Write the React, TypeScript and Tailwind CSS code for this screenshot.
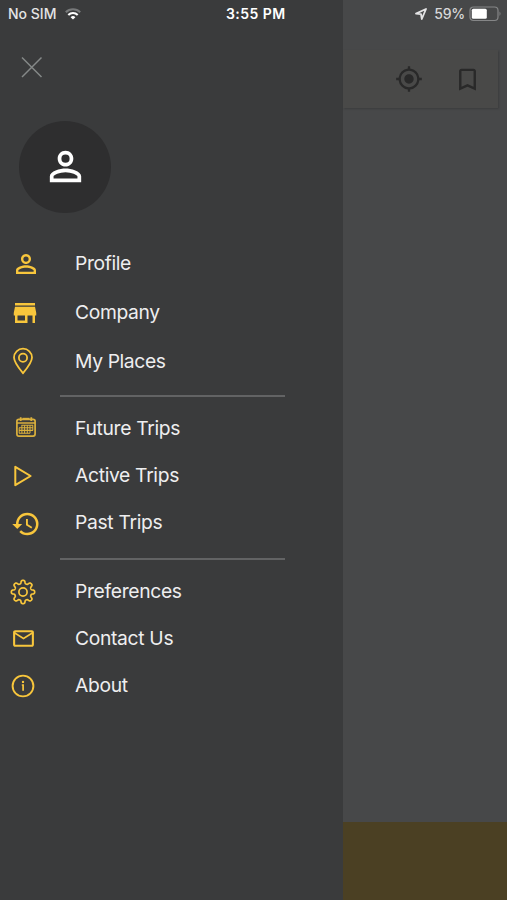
import React from "react";
import {
  MdBookmarkBorder,
  MdHistory,
  MdMailOutline,
  MdMyLocation,
  MdPersonOutline,
  MdStore,
} from "react-icons/md";

type MenuItem = {
  label: string;
  icon: React.ReactNode;
};

// Eight rounded teeth around the centre of a 26x26 box
const gearPoints = Array.from({ length: 180 }, (_, i) => {
  const a = (i / 180) * Math.PI * 2;
  const r = 10.1 + 1.6 * Math.tanh(2 * Math.cos(8 * a));
  return `${(13 + r * Math.sin(a)).toFixed(2)},${(13 - r * Math.cos(a)).toFixed(2)}`;
}).join(" ");

function PinIcon() {
  return (
    <svg width="22" height="28" viewBox="0 0 22 28" fill="none" stroke="currentColor" strokeWidth="1.8" className="ml-3">
      <path d="M11 26.2C8.2 22.8 2 15.4 2 10.5a9 8.8 0 0 1 18 0c0 4.9-6.2 12.3-9 15.7Z" />
      <circle cx="11" cy="10.8" r="4.1" />
    </svg>
  );
}

function CalendarIcon() {
  return (
    <svg width="20" height="20" viewBox="0 0 20 20" fill="none" stroke="currentColor" className="ml-4 mb-[3px] opacity-85">
      <rect x="0.9" y="2.3" width="18.2" height="16.8" rx="2" strokeWidth="1.7" />
      <path d="M1 6h18" strokeWidth="1.5" />
      <path d="M4.7 0.3v3.8M15.3 0.3v3.8" strokeWidth="1.8" />
      <path d="M6.5 1.4h7" strokeWidth="1.2" />
      <path d="M5.5 8.2h11.5M3 10.8h14M3 13.4h14M3 16.2h11" strokeWidth="1.1" />
      <path d="M3.2 10.8v5.4M5.9 8.2v8M8.6 8.2v8M11.3 8.2v8M14 8.2v8M16.8 8.2v5.2" strokeWidth="1" />
    </svg>
  );
}

function PlayIcon() {
  return (
    <svg width="20" height="22" viewBox="0 0 20 22" fill="none" stroke="currentColor" strokeWidth="2" strokeLinejoin="round" className="ml-[13px]">
      <path d="M2.3 1.8v18.4L17.6 11Z" />
    </svg>
  );
}

function GearIcon() {
  return (
    <svg width="26" height="26" viewBox="0 0 26 26" fill="none" stroke="currentColor" strokeWidth="1.7" className="ml-[10px] mt-[1px]">
      <polygon points={gearPoints} strokeLinejoin="round" />
      <circle cx="13" cy="13" r="4.1" />
    </svg>
  );
}

function InfoIcon() {
  return (
    <svg width="24" height="24" viewBox="0 0 24 24" fill="none" stroke="currentColor" className="ml-[11px] mt-[1px]">
      <circle cx="12" cy="12" r="10.4" strokeWidth="1.9" />
      <circle cx="12" cy="7.9" r="1.2" fill="currentColor" stroke="none" />
      <path d="M10.8 11h1.3v5.8" strokeWidth="1.7" />
    </svg>
  );
}

const accountItems: MenuItem[] = [
  { label: "Profile", icon: <MdPersonOutline size={30} className="ml-[10.5px] mt-[3px]" /> },
  { label: "Company", icon: <MdStore size={30} className="ml-[10px] mt-[3px]" /> },
  { label: "My Places", icon: <PinIcon /> },
];

const tripItems: MenuItem[] = [
  { label: "Future Trips", icon: <CalendarIcon /> },
  { label: "Active Trips", icon: <PlayIcon /> },
  { label: "Past Trips", icon: <MdHistory size={30} className="ml-[11px] mt-[3px]" /> },
];

const supportItems: MenuItem[] = [
  { label: "Preferences", icon: <GearIcon /> },
  { label: "Contact Us", icon: <MdMailOutline size={25} className="ml-[10.5px]" /> },
  { label: "About", icon: <InfoIcon /> },
];

function MenuGroup({ items, rowClass, labelClass }: { items: MenuItem[]; rowClass: string; labelClass: string }) {
  return (
    <ul>
      {items.map((item) => (
        <li key={item.label} className={`flex items-center ${rowClass}`}>
          <span className="flex w-[75px] shrink-0 items-center text-[#f8c63c]">{item.icon}</span>
          <span className={`whitespace-nowrap text-[19.3px] leading-6 text-[#eeeeef] ${labelClass}`}>
            {item.label}
          </span>
        </li>
      ))}
    </ul>
  );
}

function Drawer() {
  return (
    <aside className="flex w-[343px] shrink-0 flex-col bg-[#3a3b3c]">
      <div className="flex h-7 items-center pb-px pl-2 text-[14px] text-[#e4e4e5]">
        <span className="w-[57px] whitespace-nowrap font-medium">No SIM</span>
        <svg width="16" height="12" viewBox="0 0 16 12" fill="none" strokeWidth="2.1">
          <path d="M0.8 4.2a10.3 10.3 0 0 1 14.4 0" stroke="#77797a" />
          <path d="M3.3 6.9a6.8 6.8 0 0 1 9.4 0" stroke="#fff" />
          <path d="M8 11.5 5.6 9.2a3.4 3.4 0 0 1 4.8 0Z" fill="#fff" />
        </svg>
        <span className="ml-[145px] whitespace-nowrap font-semibold tracking-[0.45px] text-white">3:55 PM</span>
      </div>

      <button className="ml-[21px] mt-7 h-[22px] w-[22px]" aria-label="Close menu">
        <svg width="22" height="22" viewBox="0 0 22 22" stroke="#858988" strokeWidth="1.5">
          <path d="m1 1.5 19.5 19.5M20.5 1.5 1 21" />
        </svg>
      </button>

      <div className="ml-[19px] mt-[42.5px] flex h-[92px] w-[92px] items-center justify-center rounded-full bg-[#2e2e2f] text-white">
        <MdPersonOutline size={47} />
      </div>

      <nav className="mt-[25.5px]">
        <MenuGroup items={accountItems} rowClass="h-[49px]" labelClass="tracking-[-0.38px]" />
        <hr className="ml-[60px] mt-[10px] h-[2px] w-[225px] border-0 bg-[#626364]" />
        <div className="mt-2">
          <MenuGroup items={tripItems} rowClass="h-[47px]" labelClass="mb-[2px] tracking-[-0.33px]" />
        </div>
        <hr className="ml-[60px] mt-3 h-[2px] w-[225px] border-0 bg-[#626364]" />
        <div className="mt-2">
          <MenuGroup items={supportItems} rowClass="h-[47px]" labelClass="mb-[2px] tracking-[-0.33px]" />
        </div>
      </nav>
    </aside>
  );
}

export default function App() {
  return (
    <div className="flex h-[900px] w-[507px] overflow-hidden bg-[#474849] font-['Inter',sans-serif]">
      <Drawer />

      {/* Dimmed map screen behind the drawer */}
      <main className="flex flex-1 flex-col">
        <div className="flex h-7 items-center justify-end pb-px pr-[5px] text-[14px] text-[#d8d8d9]">
          <svg width="12" height="12" viewBox="0 0 12 12" fill="none" stroke="#e4e4e5" strokeWidth="1.8" strokeLinejoin="round">
            <path d="M11 1 6.8 11 6 6.2 1 5.6Z" />
          </svg>
          <span className="ml-[7px] whitespace-nowrap font-medium tracking-[-0.2px]">59%</span>
          <svg width="33" height="16" viewBox="0 0 33 16" className="ml-1">
            <rect x="1" y="1" width="28" height="13.5" rx="3.5" fill="none" stroke="#858687" strokeWidth="1.2" />
            <rect x="2.8" y="2.8" width="15" height="10" rx="1.5" fill="#fff" />
            <path d="M30.5 5.5q2 2.2 0 4.5Z" fill="#858687" />
          </svg>
        </div>

        <div className="mr-[9px] mt-[22px] flex h-[58px] items-center justify-end gap-[30px] bg-[#494948] pr-4 text-[#292929] shadow-[1px_1px_2px_rgba(0,0,0,0.18)]">
          <MdMyLocation size={28} />
          <MdBookmarkBorder size={29} />
        </div>

        <div className="mt-auto h-[78px] bg-[#4b4023]" />
      </main>
    </div>
  );
}
